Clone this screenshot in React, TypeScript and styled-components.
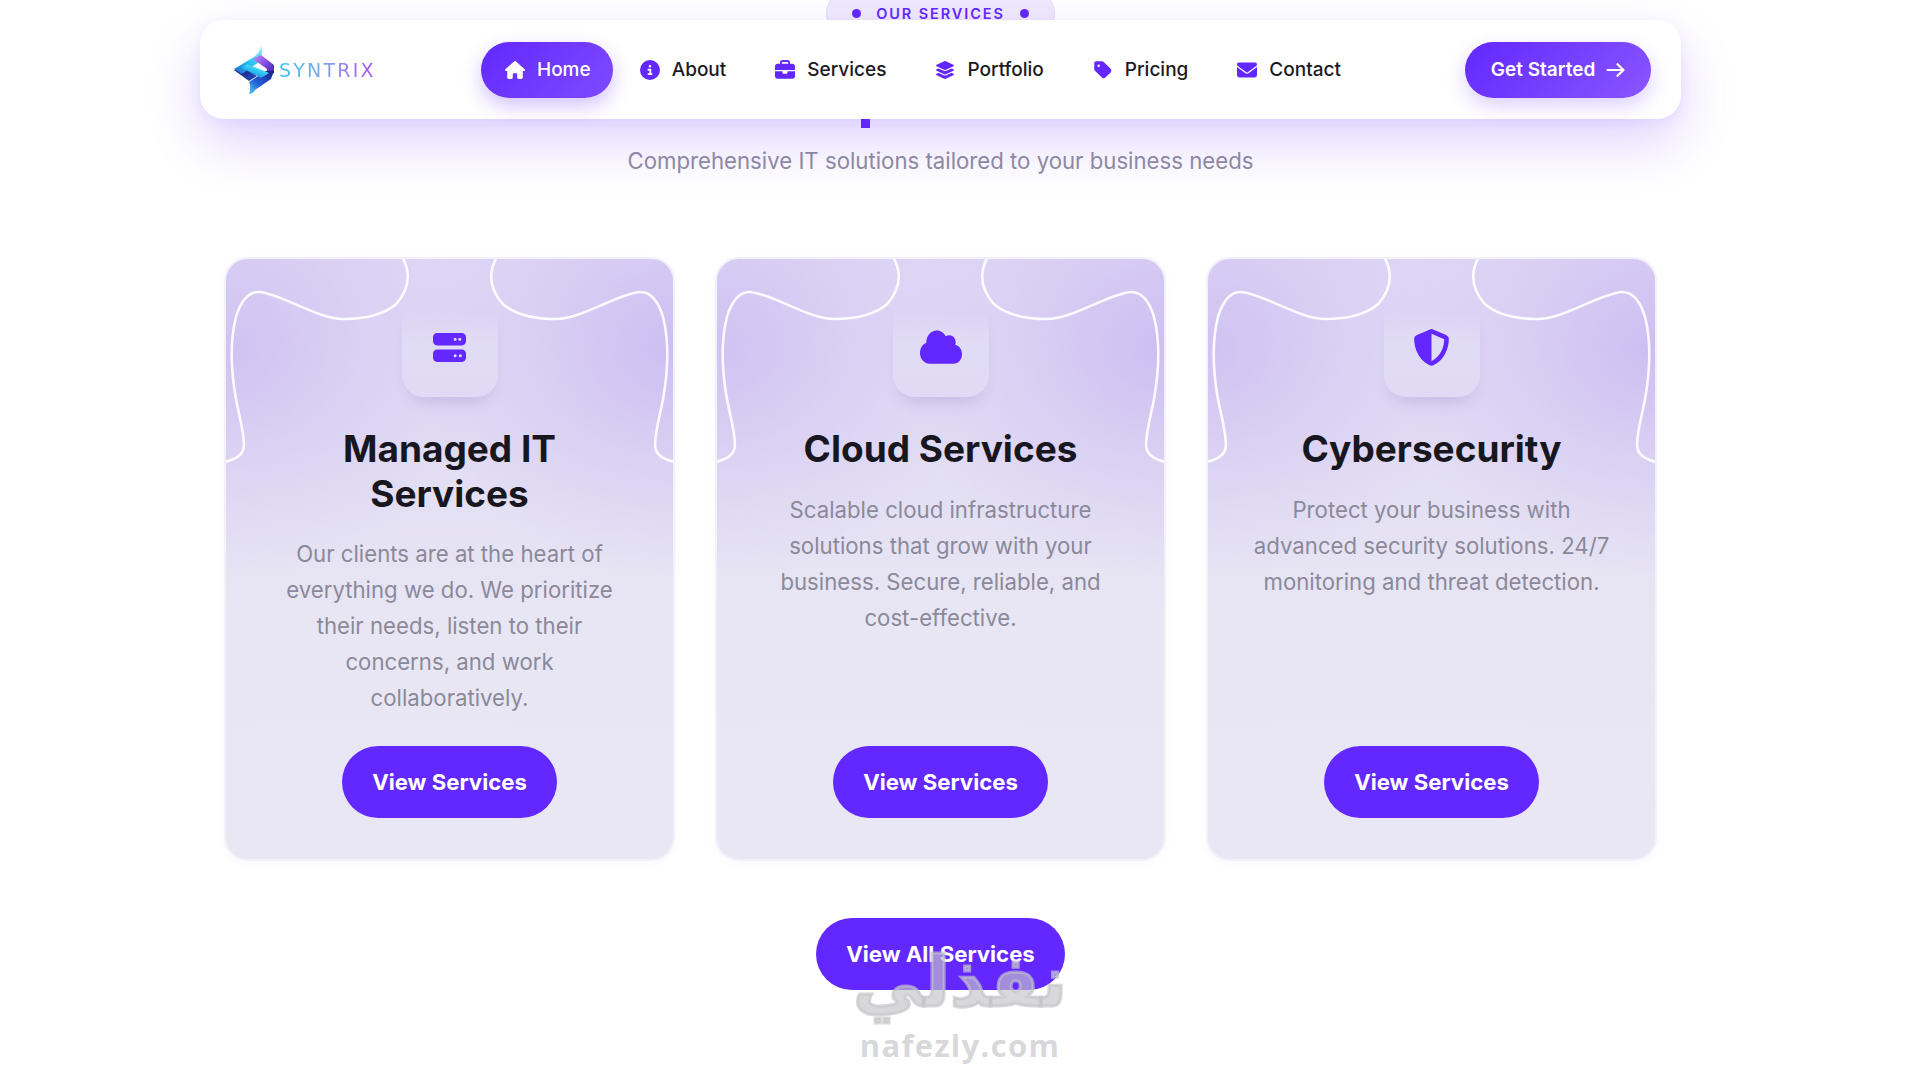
import React from "react";
import styled, { createGlobalStyle } from "styled-components";
import {
  FaBriefcase, FaCircleInfo, FaCloud, FaEnvelope, FaHouse,
  FaLayerGroup, FaServer, FaShieldHalved, FaTag,
} from "react-icons/fa6";

const Global = createGlobalStyle`
  html, body { margin: 0; padding: 0; background: #fff; overflow: hidden; }
  * { box-sizing: border-box; }
  body { font-family: Inter, "Noto Sans", sans-serif; }
`;

const violet = "#6228ff";

const Page = styled.div`
  position: relative;
  width: 1881px;
  height: 1065px;
  overflow: hidden;
  display: flex;
  flex-direction: column;
  align-items: center;
`;

const Nav = styled.nav`
  position: absolute;
  z-index: 3;
  top: 20px;
  left: 200px;
  width: 1481px;
  height: 99px;
  padding: 0 30px 0 33px;
  display: flex;
  align-items: center;
  justify-content: space-between;
  background: #fff;
  border-radius: 24px;
  box-shadow: 0 24px 54px rgba(98, 40, 255, 0.2), 0 4px 14px rgba(98, 40, 255, 0.06);
`;

const Brand = styled.div`
  width: 146px;
  display: flex;
  align-items: center;
  gap: 4px;
`;

const BrandName = styled.span`
  font-family: "DejaVu Sans", sans-serif;
  font-size: 19px;
  font-weight: 400;
  letter-spacing: 2.2px;
  line-height: 1;
  margin-top: 2px;
  background: linear-gradient(90deg, #35c3ee 0%, #7fa6ec 45%, #a46cf0 80%, #9a4cf2 100%);
  -webkit-background-clip: text;
  background-clip: text;
  color: transparent;
`;

const Links = styled.div`
  display: flex;
  align-items: center;
  gap: 3px;
`;

const NavLink = styled.a<{ $active?: boolean }>`
  height: 56px;
  padding: 0 22px 0 24px;
  display: flex;
  align-items: center;
  gap: 12px;
  border-radius: 28px;
  font-size: 19px;
  font-weight: 500;
  color: ${(p) => (p.$active ? "#fff" : "#1b1a22")};
  background: ${(p) => (p.$active ? `linear-gradient(135deg, ${violet}, #7f4aff)` : "transparent")};
  box-shadow: ${(p) => (p.$active ? "0 8px 20px rgba(98, 40, 255, 0.28)" : "none")};
  svg {
    width: 20px;
    height: 20px;
    color: ${(p) => (p.$active ? "#fff" : violet)};
    flex: none;
  }
`;

const StartButton = styled.a`
  width: 186px;
  height: 56px;
  display: flex;
  align-items: center;
  justify-content: center;
  gap: 11px;
  border-radius: 28px;
  font-size: 19px;
  font-weight: 600;
  color: #fff;
  background: linear-gradient(135deg, ${violet}, #8a55ff);
  box-shadow: 0 8px 20px rgba(98, 40, 255, 0.22);
`;

const Badge = styled.div`
  margin-top: -9px;
  width: 229px;
  height: 44px;
  flex: none;
  display: flex;
  align-items: center;
  justify-content: center;
  gap: 15px;
  border-radius: 22px;
  background: #efeafc;
  border: 1px solid #e2dbf8;
  font-size: 14.5px;
  font-weight: 600;
  letter-spacing: 1.9px;
  color: ${violet};
`;

const BadgeDot = styled.i`
  width: 9px;
  height: 9px;
  border-radius: 50%;
  background: ${violet};
`;

const Descender = styled.div`
  width: 9px;
  height: 9px;
  flex: none;
  margin: 84px 150px 0 0;
  background: ${violet};
`;

const Subtitle = styled.p`
  margin: 16px 0 0;
  height: 34px;
  font-size: 22.2px;
  line-height: 34px;
  color: #908e9f;
`;

const Cards = styled.div`
  margin-top: 79px;
  width: 1433px;
  display: grid;
  grid-template-columns: repeat(3, 1fr);
  gap: 40px;
`;

const Card = styled.article`
  position: relative;
  height: 604px;
  padding: 42px 40px 41px;
  display: flex;
  flex-direction: column;
  align-items: center;
  text-align: center;
  border-radius: 24px;
  overflow: hidden;
  border: 2px solid #f2f0f9;
  box-shadow: 0 2px 8px rgba(98, 40, 255, 0.04);
  background:
    radial-gradient(ellipse 60% 38% at 0% 15%, rgba(196, 176, 240, 0.58), rgba(196, 176, 240, 0.24) 50%, rgba(196, 176, 240, 0) 100%),
    radial-gradient(ellipse 60% 38% at 100% 15%, rgba(196, 176, 240, 0.68), rgba(196, 176, 240, 0.28) 50%, rgba(196, 176, 240, 0) 100%),
    linear-gradient(180deg, #dfd9f5 0%, #e2ddf4 30%, #e8e6f3 60%, #e9e7f3 100%);
`;

const Wave = styled.svg`
  position: absolute;
  top: 0;
  left: 0;
  width: 100%;
  height: 210px;
  pointer-events: none;
`;

const IconBox = styled.div`
  position: relative;
  width: 96px;
  height: 96px;
  flex: none;
  display: flex;
  align-items: center;
  justify-content: center;
  padding-bottom: 4px;
  border-radius: 22px;
  background: linear-gradient(180deg, rgba(226, 220, 245, 0) 12%, #e1dcf5 45%, #e0daf4 100%);
  box-shadow: 0 12px 16px -8px rgba(90, 70, 150, 0.2);
  color: ${violet};
`;

const CloudIcon = styled(FaCloud)`
  width: 42px;
  height: 38px;
`;

const Title = styled.h3`
  position: relative;
  margin: 30px 0 0;
  font-size: 37px;
  line-height: 44.5px;
  font-weight: 700;
  color: #18171f;
`;

const Text = styled.p`
  position: relative;
  margin: 20px 0 0;
  flex: 1;
  font-size: 22.2px;
  line-height: 36px;
  color: #8b8999;
`;

const ActionButton = styled.a`
  position: relative;
  height: 72px;
  padding: 0 30px 2px;
  display: inline-flex;
  flex: none;
  align-items: center;
  justify-content: center;
  border-radius: 36px;
  background: ${violet};
  color: #fff;
  font-size: 22.2px;
  font-weight: 700;
`;

const AllRow = styled.div`
  margin-top: 57px;
`;

const Watermark = styled.div`
  position: absolute;
  z-index: 2;
  left: 854px;
  top: 936px;
  width: 212px;
  display: flex;
  flex-direction: column;
  align-items: center;
  color: rgba(196, 196, 200, 0.66);
  pointer-events: none;
`;

const WatermarkArabic = styled.span`
  font-family: "DejaVu Sans", sans-serif;
  font-weight: 700;
  font-size: 70px;
  line-height: 92px;
  white-space: nowrap;
  -webkit-text-stroke: 3px rgba(196, 196, 200, 0.66);
`;

const WatermarkLatin = styled.span`
  font-family: "Open Sans", sans-serif;
  font-weight: 700;
  font-size: 31px;
  line-height: 34px;
  letter-spacing: 1.3px;
  white-space: nowrap;
`;

const Logo = () => (
  <svg width="42" height="48" viewBox="0 0 42 48">
    <defs>
      <linearGradient id="lg1" x1="0.8" y1="0" x2="0.1" y2="1">
        <stop offset="0" stopColor="#8fe8f8" />
        <stop offset="0.5" stopColor="#27c3f0" />
        <stop offset="1" stopColor="#2468dc" />
      </linearGradient>
      <linearGradient id="lg2" x1="0" y1="0" x2="1" y2="1">
        <stop offset="0" stopColor="#c98af4" />
        <stop offset="0.55" stopColor="#7a45dc" />
        <stop offset="1" stopColor="#2a1f96" />
      </linearGradient>
      <linearGradient id="lg3" x1="0" y1="0" x2="1" y2="1">
        <stop offset="0" stopColor="#0d1a5e" />
        <stop offset="1" stopColor="#2c50c8" />
      </linearGradient>
      <linearGradient id="lg4" x1="1" y1="0" x2="0" y2="1">
        <stop offset="0" stopColor="#1a1a80" />
        <stop offset="0.6" stopColor="#2460dc" />
        <stop offset="1" stopColor="#49d0f4" />
      </linearGradient>
    </defs>
    <path d="M1 24 L16 35 L24 30 L10 21Z" fill="url(#lg3)" />
    <path d="M28 0 C27 7 22 11 16 14 L1 23 L9 28 L26 16 C29 11 30 5 28 0Z" fill="url(#lg1)" />
    <path d="M20 13 L28 9 L41 19 L41 27 L33 31 L34 23Z" fill="url(#lg2)" />
    <path d="M41 25 L38 33 L22 44 C20 47 18 48 16 48 C18 42 17 38 16 36 L33 25Z" fill="url(#lg4)" />
    <path d="M14 18 L36 27 L28 32 L9 22Z" fill="url(#lg1)" />
  </svg>
);

const ArrowIcon = () => (
  <svg width="19" height="14" viewBox="0 0 19 14" fill="none" stroke="currentColor" strokeWidth="2.2" strokeLinecap="round" strokeLinejoin="round">
    <path d="M1.5 7H17.5M11.5 1.2L17.5 7L11.5 12.8" />
  </svg>
);

const WaveLines = () => (
  <Wave viewBox="0 0 449 210" preserveAspectRatio="none">
    <path
      d="M177 -2 C186 14 184 30 171 45 C158 56 140 60 118 60 C92 60 58 36 34 33 C22 32 14 44 10 58 C4 82 5 112 10 140 C13 156 18 172 18 186 C18 196 8 201 -2 203"
      fill="none" stroke="#fff" strokeOpacity="0.9" strokeWidth="2.6"
    />
    <path
      d="M272 -2 C263 14 265 30 278 45 C291 56 309 60 331 60 C357 60 391 36 415 33 C427 32 435 44 439 58 C445 82 444 112 439 140 C436 156 431 172 431 186 C431 196 441 201 451 203"
      fill="none" stroke="#fff" strokeOpacity="0.9" strokeWidth="2.6"
    />
  </Wave>
);

const cards = [
  {
    title: "Managed IT Services",
    text: "Our clients are at the heart of everything we do. We prioritize their needs, listen to their concerns, and work collaboratively.",
    icon: <FaServer size={33} />,
  },
  {
    title: "Cloud Services",
    text: "Scalable cloud infrastructure solutions that grow with your business. Secure, reliable, and cost-effective.",
    icon: <CloudIcon preserveAspectRatio="none" />,
  },
  {
    title: "Cybersecurity",
    text: "Protect your business with advanced security solutions. 24/7 monitoring and threat detection.",
    icon: <FaShieldHalved size={37} />,
  },
];

const links = [
  { label: "Home", icon: <FaHouse />, active: true },
  { label: "About", icon: <FaCircleInfo /> },
  { label: "Services", icon: <FaBriefcase /> },
  { label: "Portfolio", icon: <FaLayerGroup /> },
  { label: "Pricing", icon: <FaTag /> },
  { label: "Contact", icon: <FaEnvelope /> },
];

export default function App() {
  return (
    <Page>
      <Global />
      <Nav>
        <Brand>
          <Logo />
          <BrandName>SYNTRIX</BrandName>
        </Brand>
        <Links>
          {links.map((l) => (
            <NavLink key={l.label} $active={l.active}>
              {l.icon}
              {l.label}
            </NavLink>
          ))}
        </Links>
        <StartButton>
          Get Started <ArrowIcon />
        </StartButton>
      </Nav>

      <Badge>
        <BadgeDot />
        OUR SERVICES
        <BadgeDot />
      </Badge>
      <Descender />
      <Subtitle>Comprehensive IT solutions tailored to your business needs</Subtitle>

      <Cards>
        {cards.map((c) => (
          <Card key={c.title}>
            <WaveLines />
            <IconBox>{c.icon}</IconBox>
            <Title>{c.title}</Title>
            <Text>{c.text}</Text>
            <ActionButton>View Services</ActionButton>
          </Card>
        ))}
      </Cards>

      <AllRow>
        <ActionButton>View All Services</ActionButton>
      </AllRow>

      <Watermark>
        <WatermarkArabic>نفذلي</WatermarkArabic>
        <WatermarkLatin>nafezly.com</WatermarkLatin>
      </Watermark>
    </Page>
  );
}
